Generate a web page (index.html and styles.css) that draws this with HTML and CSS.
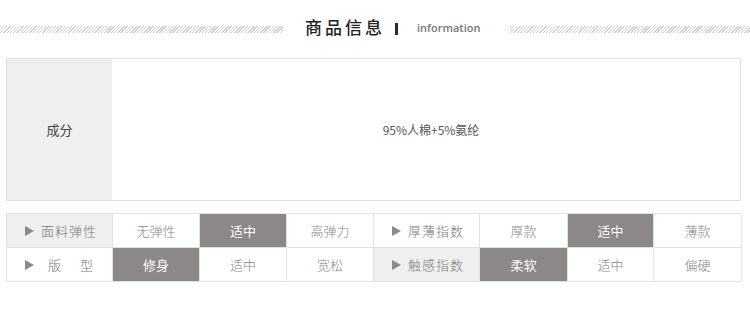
FILE: index.html
```html
<!DOCTYPE html>
<html lang="zh">
<head>
<meta charset="utf-8">
<link rel="stylesheet" href="styles.css">
</head>
<body>
<div class="page">
  <div class="header">
    <div class="stripes stripes-left"></div>
    <div class="title">商品信息</div>
    <div class="bar"></div>
    <div class="subtitle">information</div>
    <div class="stripes stripes-right"></div>
  </div>
  <div class="comp">
    <div class="comp-label">成分</div>
    <div class="comp-value">95%人棉+5%氨纶</div>
  </div>
  <div class="grid">
    <div class="cell label grey"><span class="tri"></span>面料弹性</div>
    <div class="cell">无弹性</div>
    <div class="cell on">适中</div>
    <div class="cell">高弹力</div>
    <div class="cell label"><span class="tri"></span>厚薄指数</div>
    <div class="cell">厚款</div>
    <div class="cell on">适中</div>
    <div class="cell">薄款</div>
    <div class="cell label"><span class="tri"></span><span class="wide">版</span>型</div>
    <div class="cell on">修身</div>
    <div class="cell">适中</div>
    <div class="cell">宽松</div>
    <div class="cell label grey"><span class="tri"></span>触感指数</div>
    <div class="cell on">柔软</div>
    <div class="cell">适中</div>
    <div class="cell">偏硬</div>
  </div>
</div>
</body>
</html>
```
FILE: styles.css
```css
html, body {
  margin: 0;
  padding: 0;
  background: #ffffff;
}
body {
  font-family: "Noto Sans CJK SC", "Noto Sans", sans-serif;
  color: #666;
}
.page {
  width: 750px;
  height: 314px;
}
.header {
  display: flex;
  align-items: center;
  height: 54px;
  padding-bottom: 4px;
}
.stripes {
  height: 7px;
  margin-top: 4px;
  background: repeating-linear-gradient(135deg, #d0d0d0 0, #d0d0d0 1px, #ffffff 1px, #ffffff 2.3px);
}
.stripes-left {
  width: 283px;
  margin-right: 22px;
}
.stripes-right {
  flex: 1;
  margin-left: 30px;
}
.title {
  font-size: 17px;
  font-weight: 500;
  letter-spacing: 3px;
  color: #222;
  line-height: 20px;
  width: 80px;
}
.bar {
  width: 3px;
  height: 12px;
  background: #1c2a55;
  margin-left: 10px;
  margin-top: 3px;
}
.subtitle {
  margin-left: 19px;
  width: 63px;
  white-space: nowrap;
  font-family: "Open Sans", "Liberation Sans", sans-serif;
  font-size: 11px;
  font-weight: 600;
  color: #777;
}
.comp {
  display: flex;
  margin-left: 6px;
  width: 733px;
  height: 141px;
  border: 1px solid #e2e2e2;
}
.comp-label {
  width: 105px;
  background: #efefef;
  display: flex;
  align-items: center;
  justify-content: center;
  font-size: 13px;
  color: #444;
}
.comp-value {
  flex: 1;
  display: flex;
  align-items: center;
  justify-content: center;
  font-size: 12px;
  color: #555;
  padding-left: 10px;
}
.grid {
  margin-left: 6px;
  margin-top: 12px;
  width: 735px;
  display: grid;
  grid-template-columns: 106px 87px 87px 87px 106px 88px 86px 88px;
  grid-auto-rows: 34px;
  border-top: 1px solid #e2e2e2;
  border-left: 1px solid #e2e2e2;
  box-sizing: border-box;
}
.cell {
  border-right: 1px solid #e2e2e2;
  border-bottom: 1px solid #e2e2e2;
  display: flex;
  align-items: center;
  justify-content: center;
  font-size: 13px;
  color: #888;
  font-weight: 300;
}
.cell.label {
  justify-content: flex-start;
  padding-left: 18px;
  color: #777;
  letter-spacing: 1px;
}
.cell.grey {
  background: #efefef;
}
.cell.on {
  background: #8c8888;
  color: #fff;
  font-weight: 400;
}
.tri {
  width: 0;
  height: 0;
  border-left: 9px solid #8a8a8a;
  border-top: 5px solid transparent;
  border-bottom: 5px solid transparent;
  margin-right: 7px;
}
.wide {
  margin-left: 7px;
  margin-right: 18px;
}
```
